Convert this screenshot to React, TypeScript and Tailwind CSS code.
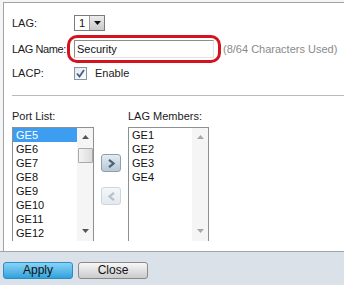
import React from "react";

const UpArrow = ({ c }: { c: string }) => (
  <svg width="7" height="4" viewBox="0 0 7 4"><path d="M0 4 L3.5 0 L7 4 Z" fill={c} /></svg>
);
const DownArrow = ({ c }: { c: string }) => (
  <svg width="7" height="4" viewBox="0 0 7 4"><path d="M0 0 L3.5 4 L7 0 Z" fill={c} /></svg>
);

function ListBox({
  items,
  selected,
  widthCls,
  active,
}: {
  items: string[];
  selected?: number;
  widthCls: string;
  active: boolean;
}) {
  return (
    <div className={`${widthCls} h-[114px] border-x border-t border-[#8e8f8f] bg-white flex overflow-hidden`}>
      <div className="flex-1 flex flex-col">
        {items.map((it, i) => (
          <div
            key={it}
            className={`h-[14px] leading-[14px] pl-[3px] ${
              i === selected ? "bg-[#3d9ef1] text-white" : "text-[#111]"
            }`}
          >
            {it}
          </div>
        ))}
      </div>
      <div className="w-[16px] bg-[#f5f5f5] flex flex-col items-center">
        <div className="h-[18px] w-full flex items-center justify-center">
          <UpArrow c={active ? "#555" : "#a8a8a8"} />
        </div>
        {active ? (
          <div className="mt-[2px] h-[15px] w-[15px] border border-[#a9a9a9] rounded-[1px] bg-gradient-to-r from-[#f4f4f4] to-[#dcdcdc]" />
        ) : null}
        <div className="flex-1" />
        <div className="h-[16px] w-full flex items-start justify-center pt-[4px]">
          <DownArrow c={active ? "#555" : "#a8a8a8"} />
        </div>
      </div>
    </div>
  );
}

export default function App() {
  return (
    <div className="w-[344px] h-[285px] flex flex-col bg-[#f3f5f7] font-['Liberation_Sans',Arial,sans-serif] text-[11px] text-[#1a1a1a] overflow-hidden">
      <div className="mt-[2px] ml-[3px] h-[249px] border-l border-t border-[#a3a3a3] bg-white overflow-hidden flex flex-col pl-[8px]">
        {/* LAG */}
        <div className="mt-[12px] h-[16px] flex items-center">
          <div className="w-[62px]">LAG:</div>
          <div className="w-[31px] h-[16px] border border-[#7b7b7b] flex items-center bg-white">
            <div className="flex-1 pl-[4px] leading-[14px] text-[#111]">1</div>
            <div className="w-[15px] h-[14px] bg-gradient-to-b from-[#ececec] to-[#c9c9c9] border-l border-[#9a9a9a] flex items-center justify-center">
              <svg width="7" height="4" viewBox="0 0 7 4"><path d="M0 0 L3.5 4 L7 0 Z" fill="#111" /></svg>
            </div>
          </div>
        </div>
        {/* LAG Name */}
        <div className="mt-[4px] h-[28px] flex items-center">
          <div className="w-[55px] whitespace-nowrap tracking-[-0.4px]">LAG Name:</div>
          <div className="shrink-0 w-[154px] h-[28px] border-[3px] border-[#d3141f] rounded-[10px] pl-[4px] pt-[2px]">
            <div className="w-[140px] h-[18px] border-t border-l border-[#8d8d8d] border-b border-r border-b-[#e2e2e2] border-r-[#e2e2e2] leading-[16px] pl-[2px] text-[#111]">
              Security
            </div>
          </div>
          <div className="ml-[2px] text-[#8a8a8a] whitespace-nowrap">(8/64 Characters Used)</div>
        </div>
        {/* LACP */}
        <div className="mt-[3px] h-[15px] flex items-center">
          <div className="w-[62px]">LACP:</div>
          <div className="w-[13px] h-[13px] border border-[#8796a6] bg-gradient-to-br from-[#e4e9ee] to-[#fdfdfd] flex items-center justify-center">
            <svg width="9" height="9" viewBox="0 0 9 9">
              <path d="M1 4.5 L3.5 7.5 L8 1" stroke="#4a5a8c" strokeWidth="1.8" fill="none" />
            </svg>
          </div>
          <div className="ml-[8px]">Enable</div>
        </div>
        {/* separator */}
        <div className="mt-[14px] border-t border-[#b9b9b9]" />
        {/* lists labels */}
        <div className="mt-[14px] h-[13px] leading-[13px] flex">
          <div className="w-[116px]">Port List:</div>
          <div>LAG Members:</div>
        </div>
        <div className="mt-[4px] flex">
          <ListBox
            widthCls="w-[82px]"
            items={["GE5", "GE6", "GE7", "GE8", "GE9", "GE10", "GE11", "GE12"]}
            selected={0}
            active
          />
          <div className="w-[34px] flex flex-col items-center">
            <div className="mt-[27px] w-[20px] h-[18px] rounded-[3px] border border-[#8da0b2] bg-gradient-to-b from-[#e4ecf2] to-[#b8c7d4] flex items-center justify-center">
              <svg width="7" height="9" viewBox="0 0 7 9">
                <path d="M1 0.8 L5.5 4.5 L1 8.2" stroke="#4b6378" strokeWidth="2.2" fill="none" />
              </svg>
            </div>
            <div className="mt-[15px] w-[20px] h-[18px] rounded-[3px] border border-[#cdd6de] bg-gradient-to-b from-[#f4f7f9] to-[#e3e9ee] flex items-center justify-center">
              <svg width="7" height="9" viewBox="0 0 7 9">
                <path d="M6 0.8 L1.5 4.5 L6 8.2" stroke="#b5c2cd" strokeWidth="2.2" fill="none" />
              </svg>
            </div>
          </div>
          <ListBox widthCls="w-[81px]" items={["GE1", "GE2", "GE3", "GE4"]} active={false} />
        </div>
      </div>
      <div className="flex-1 border-t border-[#9fa7ae] bg-[#dae1e8] flex items-start pt-[10px] pl-[3px] gap-[5px]">
        <button className="w-[70px] h-[17px] rounded-[3px] border border-[#2b8cc6] bg-gradient-to-b from-[#86d3f6] to-[#2ea2dc] text-[12px] leading-[15px] text-[#111] font-['Liberation_Sans',Arial,sans-serif]">
          Apply
        </button>
        <button className="w-[70px] h-[17px] rounded-[3px] border border-[#8a8a8a] bg-gradient-to-b from-[#f7f7f7] to-[#cbcbcb] text-[12px] leading-[15px] text-[#111] font-['Liberation_Sans',Arial,sans-serif]">
          Close
        </button>
      </div>
    </div>
  );
}
